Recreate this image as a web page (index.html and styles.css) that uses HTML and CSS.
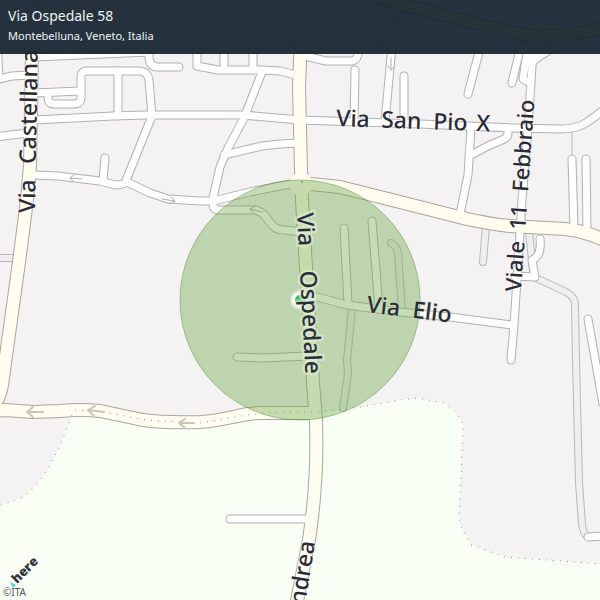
FILE: index.html
```html
<!DOCTYPE html>
<html lang="it">
<head>
<meta charset="utf-8">
<title>Via Ospedale 58</title>
<link rel="stylesheet" href="styles.css">
</head>
<body>
<main class="map-card">
  <svg class="map" viewBox="0 0 600 600" preserveAspectRatio="xMidYMid slice" role="img" aria-label="Via Ospedale 58, Montebelluna">
    <defs>
      <g id="lanes">
        <path d="M-5 258H14"/>
        <path d="M486 226L483 262"/>
        <path d="M529 232L533 270"/>
        <path d="M534 277L566 292Q575 297 575 304L576 360L579 483L582 524Q584 537 590 537"/>
        <path d="M391 243Q397 246 398 253L402 310"/>
        <path d="M352 308L347 360L348 374L343 408"/>
      </g>
      <g id="streets">
        <path d="M-3 40L-1 79L12 76L30 75"/>
        <path d="M34 57L150 52"/>
        <path d="M149 -5V58Q150 67 158 67H179"/>
        <path d="M34 0V60M40 30H60"/>
        <path d="M197 -5V66L218 70H262L280 71L300 76"/>
        <path d="M224 -5V70M253 -5V70"/>
        <path d="M262 72L244 118L228 148L220 167L213 198V204Q213 210 219 210H255Q261 211 265 216L273 226Q277 230 284 230L302 232"/>
        <path d="M224 155L262 146L280 144L300 143"/>
        <path d="M-5 137L28 133"/>
        <path d="M34 120L113 116L145 115H243L300 120L420 124L513 128L560 129Q573 129 582 125Q590 121 602 111"/>
        <path d="M34 93L80 91"/>
        <path d="M48 93V97Q48 104 54 104H74Q81 104 81 97V77Q81 71 87 71H140Q148 72 149 80L152 116L125 183"/>
        <path d="M118 71V116"/>
        <path d="M34 175L58 176L100 181L115 185Q122 185 127 182L150 193L168 199L200 201H213L250 192L295 183"/>
        <path d="M105 158L103 181"/>
        <path d="M305 56L326 61H352Q358 60 358 52L364 -5"/>
        <path d="M355 70L354 122"/>
        <path d="M398 -5L391 57L385 122"/>
        <path d="M373 46H391"/>
        <path d="M404 76V124"/>
        <path d="M468 94L484 33L521 45L512 83"/>
        <path d="M528 46L523 79L531 84"/>
        <path d="M535 40L532 66L528 128L522 200L520 233L514 325L511 360"/>
        <path d="M531 64Q536 58 545 53L570 36"/>
        <path d="M471 128L468 175L460 214"/>
        <path d="M508 129V133Q508 138 502 140L490 145L469 156"/>
        <path d="M572 159L574 228M586 159L587 231"/>
        <path d="M540 239Q542 256 532 260L535 277L515 276"/>
        <path d="M588 319L603 404"/>
        <path d="M588 537L605 536"/>
        <path d="M304 297H317L347 305L400 312L450 317L512 325"/>
        <path d="M344 228L348 304M372 221L379 308"/>
        <path d="M237 357L262 358L308 356"/>
        <path d="M230 519H312"/>
      </g>
      <g id="avenues">
        <path d="M33 -5L32 55L30 165L27 200L19 262L6 356L2 385Q0 396 -4 402"/>
        <path d="M-5 411L5 410L33 412L60 411Q80 409 100 411L143 420Q165 423 200 422Q215 421 233 417Q248 413 262 413H314"/>
        <path d="M318 -5L305 35Q301 45 300 60L299 87L301 170L302 200L306 267L313 383L316 420Q317 460 315 483Q314 505 309 540L296 606"/>
        <path d="M301 183L340 187L400 202L467 219Q490 224 510 226L565 229Q585 231 604 240"/>
        <path d="M300 184L302 184" class="junction"/>
      </g>
      <path id="bypass" d="M380 -3L400 4L483 25L525 35Q550 39 604 28"/>
    </defs>

    <rect class="ground" width="600" height="600"/>
    <path class="grass" d="M0 505Q12 502 23 497Q36 488 47 470L60 446L72 415L75 410L105 412L145 420L200 423L235 417L262 413L320 413L360 407L400 400L418 398L444 403Q458 412 463 424L461 480L459 515Q459 524 463 530L471 545L505 557L560 561L601 564V601H-1Z"/>

    <path class="lot-line" d="M572 131V156"/>
    <use href="#lanes" class="lane-edge"/>
    <use href="#lanes" class="lane"/>
    <use href="#streets" class="street-edge"/>
    <use href="#avenues" class="avenue-edge"/>
    <use href="#bypass" class="bypass-edge"/>
    <use href="#streets" class="street"/>
    <use href="#avenues" class="avenue"/>
    <use href="#bypass" class="bypass"/>

    <path class="border" d="M1 505Q12 502 23 497Q36 488 47 470L60 446L72 415L75 410L105 412L145 420L200 423L235 417L262 413L320 412L360 407L400 400L418 398L444 403Q458 412 463 424L461 480L459 515Q459 524 463 530L471 545L505 557L560 561L601 564"/>

    <g class="arrow">
      <path d="M43 412H27M33 407L27 412L33 417"/>
      <path d="M104 412L88 410M95 406L88 410L94 416"/>
      <path d="M194 423H179M185 419L179 423L185 428"/>
    </g>
    <g class="arrow arrow-dark">
      <path d="M82 179L70 178M75 174L70 178L74 182"/>
      <path d="M162 199L175 201M171 197L175 201L169 204"/>
      <path d="M262 212L250 209M256 206L250 209L254 214"/>
      <path d="M391 58V70M388 66L391 70L395 66"/>
    </g>

    <circle class="radius" cx="300" cy="300" r="120"/>
    <circle class="pin-glow" cx="300" cy="300" r="9"/>
    <circle class="pin" cx="300" cy="300" r="5"/>
    <circle class="pin-dot" cx="302" cy="182" r="1"/>

    <g class="label">
      <g transform="translate(35 213) rotate(-89)"><text>Via</text><text x="49">Castellana</text></g>
      <g transform="translate(336 126) rotate(2)"><text>Via</text><text x="45">San</text><text x="97">Pio</text><text x="140">X</text></g>
      <g transform="translate(521 292) rotate(-86)" class="label-small"><text>Viale</text><text x="62">11</text><text x="100">Febbraio</text></g>
      <g transform="translate(315 542) rotate(-81)"><text class="label-end">ndrea</text></g>
    </g>
    <g class="label label-inner">
      <g transform="translate(366 312) rotate(7)"><text>Via</text><text x="46">Elio</text></g>
    </g>
    <g class="label label-focus">
      <g transform="translate(297 213) rotate(87)"><text>Via</text><text x="58">Ospedale</text></g>
    </g>

    <path class="logo-mark" d="M10 582L16 585L13 588Z"/>
    <text class="logo" transform="translate(17 584) rotate(-45)">here</text>
    <text class="copyright" x="3" y="596">©ITA</text>
  </svg>
  <header class="address">
    <h1 class="street-name">Via Ospedale 58</h1>
    <p class="locality">Montebelluna, Veneto, Italia</p>
  </header>
</main>
</body>
</html>
```
FILE: styles.css
```css
body {
  margin: 0;
  font-family: "Noto Sans", "Open Sans", sans-serif;
}

.map-card {
  position: relative;
  height: 100vh;
  overflow: hidden;
}

.map {
  display: block;
  width: 100%;
  height: 100%;
}

.address {
  position: absolute;
  top: 0;
  left: 0;
  right: 0;
  padding: 5px 8px 8px;
  background: rgba(23, 37, 49, 0.94);
  color: #eef2f5;
}

.street-name {
  margin: 0;
  font-size: 14px;
  font-weight: 400;
  line-height: 21px;
}

.locality {
  margin: 0;
  font-size: 11px;
  line-height: 20px;
}

.ground { fill: #f4f2f2; }
.grass { fill: #f9fff5; }

.lane, .lane-edge, .street, .street-edge, .avenue, .avenue-edge,
.bypass, .bypass-edge, .border, .arrow, .lot-line {
  fill: none;
  stroke-linecap: round;
  stroke-linejoin: round;
}

.lane-edge { stroke: #b9b7b7; stroke-width: 8px; }
.lane { stroke: #f0eeee; stroke-width: 6px; }
.street-edge { stroke: #b2b0b0; stroke-width: 9px; }
.street { stroke: #ffffff; stroke-width: 7px; }
.avenue-edge { stroke: #aaa69c; stroke-width: 14px; }
.avenue { stroke: #fffcf0; stroke-width: 12px; }
.junction { stroke-width: 22px; }
.bypass-edge { stroke: #777777; stroke-width: 13px; }
.bypass { stroke: #ffff90; stroke-width: 11px; }
.lot-line { stroke: #b9b7b7; stroke-width: 1px; }

.border {
  stroke: #8f8c8c;
  stroke-width: 1px;
  stroke-linecap: butt;
  stroke-dasharray: 1 6;
}

.arrow { stroke: #c9c6b6; stroke-width: 2px; }
.arrow-dark { stroke: #b0aeae; stroke-width: 1px; }

.radius {
  fill: rgba(111, 168, 72, 0.4);
  stroke: rgba(90, 150, 60, 0.5);
  stroke-width: 1px;
}

.pin-glow { fill: #ffffff; filter: blur(1px); }
.pin { fill: #3db866; }
.pin-dot { fill: #7f9c68; }

.label {
  fill: #2b2b38;
  font-size: 23px;
  font-weight: 500;
  stroke: rgba(255, 255, 255, 0.5);
  stroke-width: 2px;
  stroke-linejoin: round;
  paint-order: stroke;
}

.label-small { font-size: 22px; }

.label-inner {
  stroke: rgba(205, 224, 188, 0.6);
}

.label-focus {
  fill: #27303a;
  stroke: rgba(228, 238, 214, 0.6);
  stroke-width: 5px;
}

.label-end { text-anchor: end; }

.logo {
  fill: #2d3540;
  font-family: "Open Sans", "Noto Sans", sans-serif;
  font-size: 13px;
  font-weight: 800;
}

.logo-mark { fill: #48dad0; }

.copyright {
  fill: #555555;
  font-size: 10px;
}
```
